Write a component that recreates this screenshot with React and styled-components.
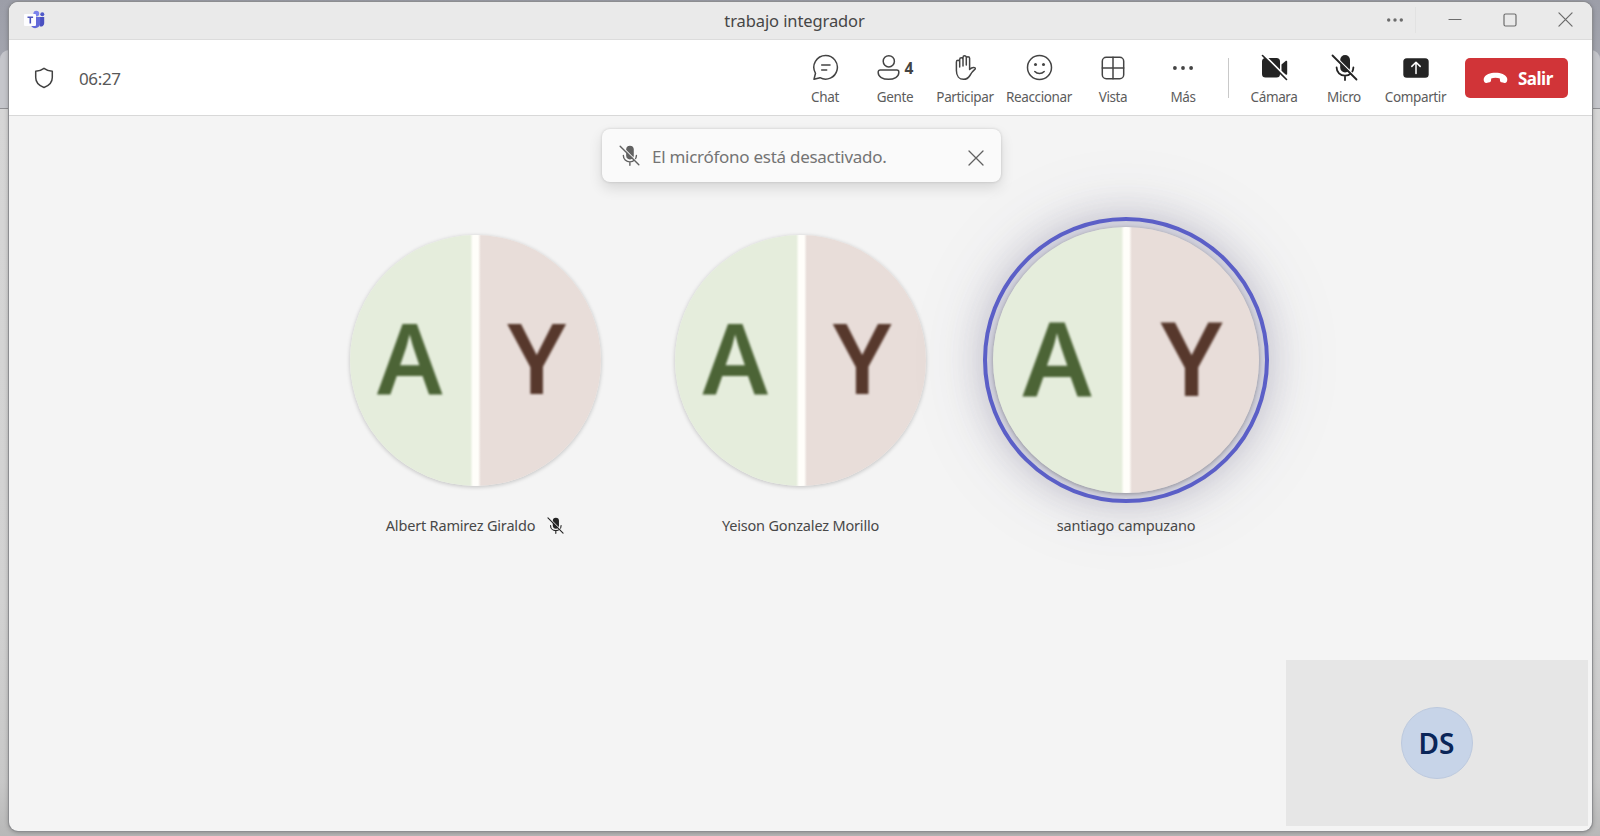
import React from "react";
import styled, { createGlobalStyle } from "styled-components";

const Global = createGlobalStyle`
  * { box-sizing: border-box; }
  html, body { margin: 0; padding: 0; }
  body {
    font-family: "Noto Sans", "Open Sans", "Liberation Sans", sans-serif;
    color: #424242;
    overflow: hidden;
  }
  svg { display: block; flex: none; }
`;

const Desktop = styled.div`
  width: 1600px;
  height: 836px;
  padding: 2px 8px 5px 9px;
  position: relative;
  isolation: isolate;
  background: linear-gradient(#9c9ea8 0, #a3a5ae 60px, #a3a5ae 108px, #d6d6d6 109px, #d2d2d2 600px, #c8c8c8 780px, #b8b8b8 836px);
`;

const BackWindow = styled.div`
  position: absolute;
  z-index: -1;
  left: 0;
  right: 0;
  top: 50px;
  height: 59px;
  background: #c5c6cb;
  border-bottom: 1px solid #8f8f93;
  border-radius: 9px 9px 0 0;
`;

const Window = styled.div`
  height: 829px;
  display: flex;
  flex-direction: column;
  background: #f4f4f4;
  border-radius: 9px;
  overflow: hidden;
  box-shadow: 0 0 0 1px #8d8e91, 0 1px 5px rgba(0, 0, 0, 0.35);
`;

const TitleBar = styled.header`
  height: 38px;
  flex: none;
  display: grid;
  grid-template-columns: 1fr auto 1fr;
  align-items: center;
  padding: 0 19px 2px 15px;
  background: #eaeaea;
  border-bottom: 1px solid #dcdcdc;
`;

const Title = styled.h1`
  margin: 2px 0 0 -8px;
  font-size: 16.5px;
  font-weight: 400;
  line-height: 24px;
  letter-spacing: -0.1px;
  color: #464646;
`;

const WindowControls = styled.div`
  display: flex;
  align-items: center;
  justify-content: flex-end;
  color: #6c6c6c;
`;

const ControlDivider = styled.i`
  width: 1px;
  height: 26px;
  margin: 0 32px 0 12px;
  background: #e2e2e2;
`;

const Control = styled.span`
  margin-left: ${(p) => p.$gap || 0}px;
`;

const Toolbar = styled.nav`
  height: 76px;
  flex: none;
  display: flex;
  align-items: center;
  padding: 0 24px 0 25px;
  background: #fff;
  border-bottom: 1px solid #d8d8d8;
`;

const Timer = styled.time`
  margin: 2px 0 0 25px;
  font-size: 17px;
  line-height: 24px;
  letter-spacing: -0.35px;
  color: #585858;
`;

const Actions = styled.div`
  display: flex;
  align-items: center;
  margin-left: auto;
`;

const Action = styled.button`
  width: ${(p) => p.$width || 70}px;
  height: 60px;
  padding: 0;
  border: 0;
  background: none;
  font: inherit;
  color: ${(p) => (p.$solid ? "#242424" : "#444")};
  display: flex;
  flex-direction: column;
  align-items: center;
`;

const ActionIcon = styled.span`
  height: 30px;
  display: flex;
  align-items: center;
  gap: 5px;
  margin-top: 5px;
`;

const ActionLabel = styled.span`
  margin-top: 4px;
  font-size: 13.5px;
  line-height: 20px;
  letter-spacing: -0.38px;
  color: #5c5c5c;
`;

const Count = styled.b`
  font-size: 15.5px;
  font-weight: 700;
  line-height: 20px;
`;

const Divider = styled.i`
  width: 1px;
  height: 40px;
  margin: 0 10px;
  background: #c9c9c9;
`;

const LeaveButton = styled.button`
  width: 103px;
  height: 40px;
  margin-left: 13px;
  padding: 0 0 0 18px;
  border: 0;
  border-radius: 5px;
  background: #d13438;
  color: #fff;
  font: 700 17px/24px "Noto Sans", "Open Sans", sans-serif;
  letter-spacing: -0.5px;
  display: flex;
  align-items: center;
  gap: 10px;
`;

const LeaveLabel = styled.span`
  margin-top: 2px;
`;

const Stage = styled.main`
  flex: 1;
  position: relative;
  padding-top: 101px;
`;

const Toast = styled.div`
  position: absolute;
  z-index: 2;
  left: 593px;
  top: 13px;
  width: 399px;
  height: 53px;
  padding: 0 17px 0 17px;
  display: flex;
  align-items: center;
  background: #fafafa;
  border-radius: 8px;
  color: #616161;
  box-shadow: 0 0 3px rgba(0, 0, 0, 0.16), 0 6px 14px rgba(0, 0, 0, 0.12);
`;

const ToastText = styled.span`
  flex: 1;
  margin: 3px 0 0 12px;
  font-size: 17px;
  line-height: 24px;
  letter-spacing: -0.27px;
  color: #747474;
`;

const Dismiss = styled.span`
  margin-top: 5px;
`;

const Participants = styled.div`
  display: flex;
  justify-content: center;
`;

const Participant = styled.section`
  width: 325.5px;
  display: flex;
  flex-direction: column;
  align-items: center;
`;

const Ring = styled.div`
  width: 286px;
  height: 286px;
  border-radius: 50%;
  display: grid;
  place-items: center;
  border: 4px solid ${(p) => (p.$speaking ? "#5b5fc7" : "transparent")};
  background: ${(p) => (p.$speaking ? "#cfcfdb" : "transparent")};
  box-shadow: ${(p) =>
    p.$speaking
      ? "0 0 38px rgba(72, 66, 110, 0.26), 0 0 84px rgba(72, 66, 110, 0.10)"
      : "none"};
`;

const Avatar = styled.div`
  width: ${(p) => (p.$large ? 266 : 251)}px;
  height: ${(p) => (p.$large ? 266 : 251)}px;
  border-radius: 50%;
  overflow: hidden;
  display: grid;
  grid-template-columns: 1fr 1fr;
  font-size: ${(p) => (p.$large ? 103 : 97.5)}px;
  font-weight: 600;
  line-height: 1;
  box-shadow: 0 1px 4px rgba(0, 0, 0, ${(p) => (p.$large ? 0.32 : 0.22)});
`;

const Half = styled.div`
  display: flex;
  align-items: center;
  justify-content: center;
  padding: ${(p) => (p.$right ? "0 2px 7px 0" : "0 5px 7px 0")};
  color: ${(p) => (p.$right ? "#57382c" : "#4c6436")};
  background: ${(p) =>
    p.$right
      ? "linear-gradient(90deg, #fffefa 3px, #e8ddd9 6px)"
      : "linear-gradient(270deg, #fffefa 2px, #e5eddc 5px)"};
`;

const Letter = styled.span`
  filter: blur(1.2px);
`;

const Name = styled.div`
  height: 24px;
  margin-top: 10px;
  display: flex;
  align-items: center;
  gap: 12px;
  font-size: 14.5px;
  line-height: 24px;
  letter-spacing: -0.18px;
  color: #484848;
`;

const NameIcon = styled.span`
  color: #242424;
`;

const SelfView = styled.aside`
  position: absolute;
  right: 4px;
  bottom: 5px;
  width: 302px;
  height: 166px;
  display: grid;
  place-items: center;
  background: #e6e6e6;
`;

const SelfAvatar = styled.div`
  width: 72px;
  height: 72px;
  padding: 0 1px 1px 0;
  border-radius: 50%;
  display: grid;
  place-items: center;
  background: #c7d4e8;
  border: 1px solid #bcc9de;
  color: #0a2558;
  font-size: 28px;
  font-weight: 600;
  line-height: 1;
`;

const line = {
  fill: "none",
  stroke: "currentColor",
  strokeWidth: 1.5,
  strokeLinecap: "round",
  strokeLinejoin: "round",
};

const TeamsLogo = () => (
  <svg width="22" height="20" viewBox="0 0 22 20">
    <circle cx="18.3" cy="4.3" r="2" fill="#5059c9" />
    <path d="M15 7h5.2v6.2a3.2 3.2 0 0 1-4.4 3z" fill="#4a50c0" />
    <circle cx="12.3" cy="3.6" r="2.9" fill="#7b83eb" />
    <path d="M7.5 7h8.7v6.2a5 5 0 0 1-8.7 3.3z" fill="#6269d8" />
    <rect x="0" y="4" width="12" height="12" rx="1" fill="#fdfdff" />
    <path d="M3.5 7.2h5.6M6.3 7.2v6.2" stroke="#4b53bc" strokeWidth="1.6" />
  </svg>
);

const Shield = () => (
  <svg width="20" height="22" viewBox="0 0 20 22" {...line}>
    <path d="M10 1.3C12.500 3.200 15.200 4 18.300 4.200V10.500C18.300 15.300 15.200 18.600 10 20.500C4.800 18.600 1.700 15.300 1.700 10.500V4.200C4.800 4 7.500 3.200 10 1.300Z" />
  </svg>
);

const Chat = () => (
  <svg width="27" height="27" viewBox="0 0 27 27" {...line}>
    <path d="M13.700 1.500a11.800 11.800 0 1 1-5.700 22.200L2 25.300l1.500-6A11.800 11.800 0 0 1 13.700 1.500ZM9.700 11h8.300M9.700 16h5" />
  </svg>
);

const People = () => (
  <svg width="23" height="27" viewBox="0 0 23 27" {...line}>
    <circle cx="11.800" cy="7.300" r="5.600" />
    <path d="M3.200 16h16.600a2 2 0 0 1 2 2v.8c0 4-4.600 6.500-10.300 6.500S1.200 22.800 1.200 18.800V18a2 2 0 0 1 2-2Z" />
  </svg>
);

const Hand = () => (
  <svg width="23" height="27" viewBox="0 0 23 27" {...line}>
    <path d="M5.700 13V5.400a1.600 1.600 0 0 1 3.300 0V12M9 11V3.500a1.600 1.600 0 0 1 3.300 0V11M12.300 11V4.300a1.600 1.600 0 0 1 3.300 0V12M5.700 8a1.600 1.600 0 0 0-3.300 0v8.400c0 5.600 3 8.900 7.200 8.900 3.100 0 4.900-1.400 6.300-3.800 1.200-2.100 2.700-4.300 4.900-6.100.8-.7.700-1.500-.2-1.800-1.900-.6-3.300.1-5 1.800V7.200M5.700 8v4" />
  </svg>
);

const Smile = () => (
  <svg width="27" height="27" viewBox="0 0 27 27" {...line}>
    <circle cx="13.500" cy="13.500" r="12" />
    <path d="M8.800 17.500c2.500 2.700 6.900 2.700 9.400 0" />
    <circle cx="9.500" cy="10.500" r="1.500" fill="currentColor" stroke="none" />
    <circle cx="17.500" cy="10.500" r="1.500" fill="currentColor" stroke="none" />
  </svg>
);

const GridIcon = () => (
  <svg width="24" height="24" viewBox="0 0 24 24" {...line}>
    <rect x="1.300" y="1.300" width="21.400" height="21.400" rx="4" />
    <path d="M12 1.300v21.400M1.300 12h21.400" />
  </svg>
);

const Dots = ({ width, radius }) => (
  <svg width={width} height="6" viewBox={`0 0 ${width} 6`} fill="currentColor">
    <circle cx={radius} cy="3" r={radius} />
    <circle cx={width / 2} cy="3" r={radius} />
    <circle cx={width - radius} cy="3" r={radius} />
  </svg>
);

const CameraOff = () => (
  <svg width="27" height="27" viewBox="0 0 27 27">
    <rect x="1" y="4" width="18" height="19.500" rx="3.500" fill="#242424" />
    <path d="M20.500 10.500 24.600 7c.7-.5 1.600-.1 1.600.8v12c0 .9-.9 1.300-1.600.8l-4.100-3.500Z" fill="#242424" />
    <path d="M3 1 27.500 25.500" stroke="#fff" strokeWidth="2" />
    <path d="M1.500 1.500 25.500 25.500" stroke="#242424" strokeWidth="1.600" strokeLinecap="round" />
  </svg>
);

const MicOff = ({ size = 27, cut = "#fff" }) => (
  <svg width={size} height={size} viewBox="0 0 27 27" fill="none">
    <rect x="9.200" y="1" width="9.800" height="17.500" rx="4.900" fill="currentColor" />
    <path d="M5.600 13.500c0 4.600 3.600 8.200 8.400 8.200s8.400-3.600 8.400-8.200M14 21.700V26" stroke="currentColor" strokeWidth="1.800" strokeLinecap="round" />
    <path d="M3 1.200 28 26.200" stroke={cut} strokeWidth="1.600" />
    <path d="M1.500 1.500 25.500 25.500" stroke="currentColor" strokeWidth="1.800" strokeLinecap="round" />
  </svg>
);

const Share = () => (
  <svg width="26" height="20" viewBox="0 0 26 20" fill="none">
    <rect x=".3" y=".3" width="25.400" height="19.400" rx="3.500" fill="#242424" />
    <path d="M13 15.500V4.500M8.800 8.400 13 4.200l4.200 4.200" stroke="#fff" strokeWidth="1.500" strokeLinecap="round" strokeLinejoin="round" />
  </svg>
);

const HangUp = () => (
  <svg width="25" height="12" viewBox="0 0 25 12" fill="#fff">
    <path d="M12.500.8C18 .8 22.300 2.600 23.800 5.600c.7 1.400.6 2.700.1 4-.4 1-1.200 1.500-2.300 1.300l-2.900-.6c-1-.2-1.600-.9-1.700-1.900l-.2-1.900c-1.200-.6-2.600-.8-4.300-.8s-3.100.2-4.300.8L8 8.400c-.1 1-.7 1.700-1.700 1.900l-2.900.6c-1.100.2-1.900-.3-2.300-1.300-.5-1.300-.6-2.600.1-4C2.700 2.600 7 .8 12.500.8Z" />
  </svg>
);

const Cross = ({ size }) => (
  <svg width={size} height={size} viewBox="0 0 16 16" {...line} strokeWidth={1.3}>
    <path d="M1 1l14 14M15 1 1 15" />
  </svg>
);

const callActions = [
  { label: "Chat", icon: <Chat /> },
  { label: "Gente", icon: <People />, count: 4 },
  { label: "Participar", icon: <Hand /> },
  { label: "Reaccionar", icon: <Smile />, width: 78 },
  { label: "Vista", icon: <GridIcon /> },
  { label: "Más", icon: <Dots width={20} radius={1.9} /> },
];

const deviceActions = [
  { label: "Cámara", icon: <CameraOff />, solid: true },
  { label: "Micro", icon: <MicOff />, solid: true },
  { label: "Compartir", icon: <Share />, width: 73, solid: true },
];

const people = [
  { name: "Albert Ramirez Giraldo", muted: true },
  { name: "Yeison Gonzalez Morillo" },
  { name: "santiago campuzano", speaking: true },
];

const renderAction = (a) => (
  <Action key={a.label} $width={a.width} $solid={a.solid}>
    <ActionIcon>
      {a.icon}
      {a.count && <Count>{a.count}</Count>}
    </ActionIcon>
    <ActionLabel>{a.label}</ActionLabel>
  </Action>
);

export default function App() {
  return (
    <>
      <Global />
      <Desktop>
        <BackWindow />
        <Window>
          <TitleBar>
            <TeamsLogo />
            <Title>trabajo integrador</Title>
            <WindowControls>
              <Dots width={16} radius={1.7} />
              <ControlDivider />
              <Control>
                <svg width="14" height="14" viewBox="0 0 14 14" {...line} strokeWidth={1.2}>
                  <path d="M1 6.500h12" />
                </svg>
              </Control>
              <Control $gap={41}>
                <svg width="14" height="14" viewBox="0 0 14 14" {...line} strokeWidth={1.2}>
                  <rect x="1" y="1" width="12" height="12" rx="1.500" />
                </svg>
              </Control>
              <Control $gap={41}>
                <Cross size={15} />
              </Control>
            </WindowControls>
          </TitleBar>
          <Toolbar>
            <Shield />
            <Timer>06:27</Timer>
            <Actions>
              {callActions.map(renderAction)}
              <Divider />
              {deviceActions.map(renderAction)}
              <LeaveButton>
                <HangUp />
                <LeaveLabel>Salir</LeaveLabel>
              </LeaveButton>
            </Actions>
          </Toolbar>
          <Stage>
            <Toast>
              <MicOff size={21} cut="#fafafa" />
              <ToastText>El micrófono está desactivado.</ToastText>
              <Dismiss>
                <Cross size={16} />
              </Dismiss>
            </Toast>
            <Participants>
              {people.map((p) => (
                <Participant key={p.name}>
                  <Ring $speaking={p.speaking}>
                    <Avatar $large={p.speaking}>
                      <Half>
                        <Letter>A</Letter>
                      </Half>
                      <Half $right>
                        <Letter>Y</Letter>
                      </Half>
                    </Avatar>
                  </Ring>
                  <Name>
                    {p.name}
                    {p.muted && (
                      <NameIcon>
                        <MicOff size={17} cut="#f4f4f4" />
                      </NameIcon>
                    )}
                  </Name>
                </Participant>
              ))}
            </Participants>
            <SelfView>
              <SelfAvatar>DS</SelfAvatar>
            </SelfView>
          </Stage>
        </Window>
      </Desktop>
    </>
  );
}
